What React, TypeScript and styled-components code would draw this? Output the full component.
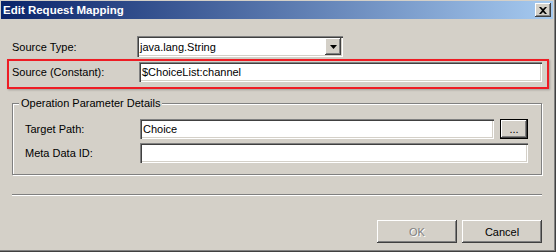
import React from "react";
import styled, { createGlobalStyle } from "styled-components";

const Global = createGlobalStyle`
  html, body { margin: 0; padding: 0; background: #d4d0c8; }
  body { font-family: "Liberation Sans", Arial, sans-serif; font-size: 11px; color: #000; }
  * { box-sizing: border-box; }
`;

const Window = styled.div`
  width: 556px;
  height: 252px;
  background: #d4d0c8;
  padding: 1px 3px 3px 1px;
  box-shadow: inset -1px -1px #404040, inset -2px -2px #808080, inset 1px 1px #d4d0c8;
  display: flex;
  flex-direction: column;
`;

const TitleBar = styled.div`
  height: 18px;
  display: flex;
  align-items: center;
  justify-content: space-between;
  padding: 0 2px 0 2px;
  background: linear-gradient(to right, #0a246a, #a6caf0);
`;

const Title = styled.span`
  color: #fff;
  font-weight: bold;
  font-size: 11.5px;
`;

const CloseButton = styled.div`
  width: 16px;
  height: 14px;
  background: #d4d0c8;
  box-shadow: inset -1px -1px #404040, inset 1px 1px #fff, inset -2px -2px #808080;
  display: flex;
  align-items: center;
  justify-content: center;
`;

const Body = styled.div`
  flex: 1;
  display: flex;
  flex-direction: column;
  padding: 17px 11px 0 11px;
`;

const Row = styled.div<{ $labelWidth: number }>`
  display: grid;
  grid-template-columns: ${(p) => p.$labelWidth}px 1fr;
  align-items: center;
`;

const Label = styled.span`
  font-size: 11px;
  white-space: nowrap;
`;

const Highlight = styled.div`
  margin: 2px -7px 0 -5px;
  border: 2px solid #ee1c24;
  padding: 1px 5px 5px 3px;
  box-shadow: 1px 1px 2px rgba(0, 0, 0, 0.25);
`;

const Sunken = styled.div<{ $width?: number; $height?: number }>`
  height: ${(p) => p.$height ?? 20}px;
  width: ${(p) => (p.$width ? `${p.$width}px` : "auto")};
  background: #fff;
  box-shadow: inset 1px 1px #808080, inset 2px 2px #404040, inset -1px -1px #fff, inset -2px -2px #d4d0c8;
  display: flex;
  align-items: center;
  padding: 0 2px 0 3px;
  font-size: 11px;
  white-space: nowrap;
  overflow: hidden;
`;

const ComboText = styled.span`
  flex: 1;
`;

const DropButton = styled.div`
  width: 16px;
  height: 17px;
  background: #d4d0c8;
  box-shadow: inset -1px -1px #404040, inset 1px 1px #fff, inset -2px -2px #808080;
  display: flex;
  align-items: center;
  justify-content: center;
`;

const GroupBox = styled.div`
  position: relative;
  margin-top: 14px;
  height: 72px;
  border: 1px solid #808080;
  box-shadow: inset 1px 1px #fff, 1px 1px #fff;
  padding: 15px 13px 0 12px;
  display: flex;
  flex-direction: column;
  gap: 4px;
`;

const Legend = styled.span`
  position: absolute;
  top: -7px;
  left: 6px;
  padding: 0 2px;
  background: #d4d0c8;
  font-size: 11px;
`;

const InputWithButton = styled.div`
  display: flex;
  align-items: center;
  gap: 6px;
`;

const Separator = styled.div`
  margin-top: 19px;
  height: 2px;
  border-top: 1px solid #808080;
  border-bottom: 1px solid #fff;
`;

const ButtonRow = styled.div`
  margin-top: 24px;
  display: flex;
  justify-content: flex-end;
  gap: 5px;
`;

const Button = styled.button<{ $disabled?: boolean; $default?: boolean; $width: number; $height: number }>`
  width: ${(p) => p.$width}px;
  height: ${(p) => p.$height}px;
  padding: 0;
  border: ${(p) => (p.$default ? "1px solid #000" : "none")};
  background: #d4d0c8;
  box-shadow: inset -1px -1px #404040, inset 1px 1px #fff, inset -2px -2px #808080;
  font-family: "Liberation Sans", Arial, sans-serif;
  font-size: 11px;
  color: ${(p) => (p.$disabled ? "#808080" : "#000")};
  text-shadow: ${(p) => (p.$disabled ? "1px 1px #fff" : "none")};
  cursor: default;
`;

export default function App() {
  return (
    <>
      <Global />
      <Window>
        <TitleBar>
          <Title>Edit Request Mapping</Title>
          <CloseButton>
            <svg width="8" height="7" viewBox="0 0 8 7">
              <path d="M0 0h2l2 2 2-2h2L5 3.5 8 7H6L4 5 2 7H0l3-3.5z" fill="#000" />
            </svg>
          </CloseButton>
        </TitleBar>
        <Body>
          <Row $labelWidth={125}>
            <Label>Source Type:</Label>
            <Sunken $width={206} $height={21}>
              <ComboText>java.lang.String</ComboText>
              <DropButton>
                <svg width="7" height="4" viewBox="0 0 7 4">
                  <path d="M0 0h7L3.5 4z" fill="#000" />
                </svg>
              </DropButton>
            </Sunken>
          </Row>
          <Highlight>
            <Row $labelWidth={127}>
              <Label>Source (Constant):</Label>
              <Sunken>$ChoiceList:channel</Sunken>
            </Row>
          </Highlight>
          <GroupBox>
            <Legend>Operation Parameter Details</Legend>
            <Row $labelWidth={115}>
              <Label>Target Path:</Label>
              <InputWithButton>
                <Sunken style={{ flex: 1 }}>Choice</Sunken>
                <Button $default $width={28} $height={20}>...</Button>
              </InputWithButton>
            </Row>
            <Row $labelWidth={115}>
              <Label>Meta Data ID:</Label>
              <Sunken />
            </Row>
          </GroupBox>
          <Separator />
          <ButtonRow>
            <Button $disabled $width={80} $height={23}>OK</Button>
            <Button $width={80} $height={23}>Cancel</Button>
          </ButtonRow>
        </Body>
      </Window>
    </>
  );
}
